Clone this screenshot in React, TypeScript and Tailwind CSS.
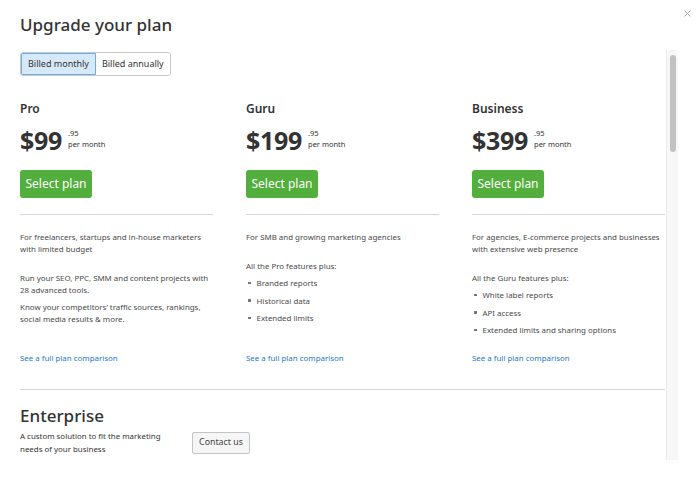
import { X } from "lucide-react";

type Plan = {
  name: string;
  price: string;
  description: string[];
  lead?: string;
  extra?: string[];
  features?: string[];
};

const plans: Plan[] = [
  {
    name: "Pro",
    price: "$99",
    description: ["For freelancers, startups and in-house marketers", "with limited budget"],
    extra: [
      "Run your SEO, PPC, SMM and content projects with 28 advanced tools.",
      "Know your competitors’ traffic sources, rankings, social media results & more.",
    ],
  },
  {
    name: "Guru",
    price: "$199",
    description: ["For SMB and growing marketing agencies"],
    lead: "All the Pro features plus:",
    features: ["Branded reports", "Historical data", "Extended limits"],
  },
  {
    name: "Business",
    price: "$399",
    description: ["For agencies, E-commerce projects and businesses", "with extensive web presence"],
    lead: "All the Guru features plus:",
    features: ["White label reports", "API access", "Extended limits and sharing options"],
  },
];

function PlanColumn({ plan }: { plan: Plan }) {
  return (
    <div className="flex flex-col">
      <h3 className="text-[12px] font-semibold leading-[16px] text-[#333]">{plan.name}</h3>
      <div className="mt-[8px] flex items-start">
        <span className="text-[25px] font-bold leading-[30px] tracking-[-0.3px] text-[#333]">{plan.price}</span>
        <div className="ml-[6px] mt-[3px] flex flex-col text-[7.5px] leading-[10px] text-[#333]">
          <span>.95</span>
          <span className="mt-[1px]">per month</span>
        </div>
      </div>
      <button className="mt-[15px] h-[28px] w-[72px] rounded-[3px] bg-[#52ae3d] text-[12px] text-white">
        Select plan
      </button>
      <div className="mt-[16px] h-px bg-[#d6d6d6]" />
      <div className="mt-[16px] text-[7.9px] leading-[12px] text-[#4a4a4a]">
        <p>
          {plan.description.map((line) => (
            <span key={line} className="block">
              {line}
            </span>
          ))}
        </p>
        {plan.extra && (
          <div className="mt-[17px] space-y-[5px]">
            <p>
              Run your SEO, PPC, SMM and content projects with
              <br />
              28 advanced tools.
            </p>
            <p>
              Know your competitors’ traffic sources, rankings,
              <br />
              social media results &amp; more.
            </p>
          </div>
        )}
        {plan.lead && <p className="mt-[17px]">{plan.lead}</p>}
        {plan.features && (
          <ul className="mt-[5px] space-y-[5.5px]">
            {plan.features.map((f) => (
              <li key={f} className="flex items-center">
                <span className="ml-[2px] mr-[6px] h-[2.5px] w-[2.5px] bg-[#777]" />
                {f}
              </li>
            ))}
          </ul>
        )}
      </div>
      <a className="mt-auto pt-[16px] text-[7.9px] leading-[12px] text-[#1c7ac8]" href="#">
        See a full plan comparison
      </a>
    </div>
  );
}

export default function App() {
  return (
    <div className="relative h-[482px] w-[700px] overflow-hidden bg-white font-['Noto_Sans',sans-serif]">
      <div className="flex h-[50px] items-start justify-between pl-[20px] pr-[7px] pt-[12px]">
        <h1 className="text-[17px] font-medium leading-[26px] text-[#333]">Upgrade your plan</h1>
        <X className="mt-[-4px] h-[11px] w-[11px] text-[#9a9a9a]" strokeWidth={1.8} />
      </div>

      <div className="flex h-[410px]">
        <div className="w-[666px] overflow-hidden pl-[20px] pr-[1px] pt-[2px]">
          <div className="flex w-fit rounded-[3px] border border-[#c8c8c8] text-[9px] leading-[20px] text-[#333]">
            <span className="rounded-l-[2px] border border-[#6aaee6] bg-[#d6e9f8] px-[6px]">Billed monthly</span>
            <span className="px-[6px] py-px">Billed annually</span>
          </div>

          <div className="mt-[25px] grid w-[645px] grid-cols-[193px_193px_193px] gap-x-[33px]">
            {plans.map((p) => (
              <PlanColumn key={p.name} plan={p} />
            ))}
          </div>

          <div className="mt-[25px] h-px w-[645px] bg-[#d6d6d6]" />

          <h2 className="mt-[14px] text-[17px] font-medium leading-[24px] text-[#333]">Enterprise</h2>
          <div className="mt-[2px] flex items-center">
            <p className="w-[156px] text-[7.9px] leading-[12.5px] text-[#333]">
              A custom solution to fit the marketing needs of your business
            </p>
            <button className="ml-[16px] h-[22px] w-[58px] rounded-[2px] border border-[#c4c4c4] bg-[#f6f6f6] text-[8.8px] text-[#444]">
              Contact us
            </button>
          </div>
        </div>

        <div className="flex w-[12px] justify-center border-l border-[#ececec] bg-[#f7f7f7] pt-[5px]">
          <div className="h-[97px] w-[6px] rounded-full bg-[#c2c2c2]" />
        </div>
      </div>
    </div>
  );
}
